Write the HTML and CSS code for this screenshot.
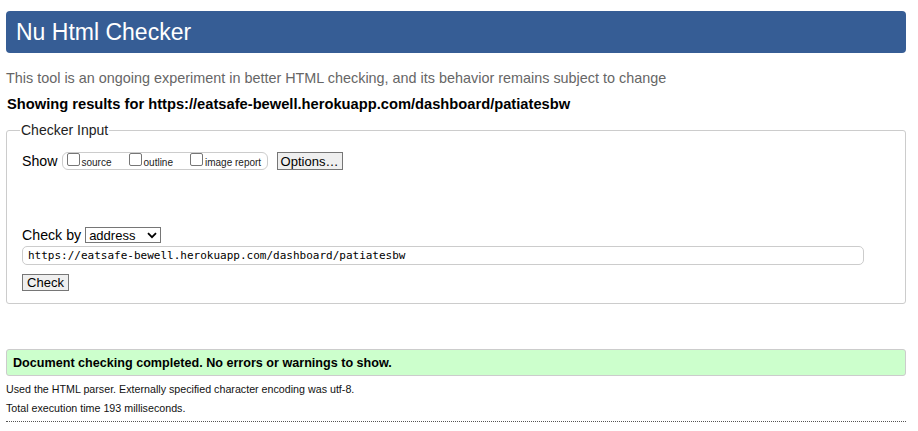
FILE: index.html
```html
<!DOCTYPE html>
<html>
<head>
<meta charset="utf-8">
<link rel="stylesheet" href="styles.css">
</head>
<body>
<header class="banner"><h1 class="title">Nu Html Checker</h1></header>
<p class="intro">This tool is an ongoing experiment in better HTML checking, and its behavior remains subject to change</p>
<p class="results-for">Showing results for https://eatsafe-bewell.herokuapp.com/dashboard/patiatesbw</p>
<fieldset class="checker">
  <legend class="legend">Checker Input</legend>
  <div class="show-row">
    <span class="show-label">Show</span>
    <span class="pill">
      <label class="opt"><span class="cb"></span>source</label>
      <label class="opt"><span class="cb"></span>outline</label>
      <label class="opt"><span class="cb"></span>image report</label>
    </span>
    <span class="btn btn-options">Options…</span>
  </div>
  <div class="checkby-row">
    <span class="checkby-label">Check by</span>
    <span class="select">address<svg class="chev" width="10" height="7" viewBox="0 0 10 7"><path d="M1 1.2 L5 5.2 L9 1.2" fill="none" stroke="#000" stroke-width="1.8"/></svg></span>
  </div>
  <div class="url">https://eatsafe-bewell.herokuapp.com/dashboard/patiatesbw</div>
  <div class="check-row"><span class="btn btn-check">Check</span></div>
</fieldset>
<div class="success">Document checking completed. No errors or warnings to show.</div>
<p class="meta">Used the HTML parser. Externally specified character encoding was utf-8.</p>
<p class="meta meta-last">Total execution time 193 milliseconds.</p>
<div class="rule"></div>
</body>
</html>
```
FILE: styles.css
```css
html, body { margin: 0; background: #fff; }
body {
  padding: 11px 12px 0 6px;
  font-family: "Liberation Sans", Arial, sans-serif;
  color: #000;
}
.banner {
  background: #365d95;
  border-radius: 4px;
  height: 42px;
  display: flex;
  align-items: center;
  padding-left: 10px;
}
.title {
  margin: 0;
  font-weight: normal;
  font-size: 23px;
  color: #fff;
}
.intro {
  margin: 17px 0 0 0;
  font-size: 14.4px;
  color: #666;
  line-height: 16px;
}
.results-for {
  margin: 10px 0 0 1px;
  font-size: 14.7px;
  font-weight: bold;
  line-height: 16px;
}
.checker {
  margin: 10px 0 0 0;
  padding: 14px 15px 12px 15px;
  border: 1px solid #ccc;
  border-radius: 3px;
}
.legend {
  padding: 0 1px;
  margin-left: -2px;
  font-size: 14px;
  color: #222;
}
.show-row {
  display: flex;
  align-items: center;
  height: 18px;
  margin-top: 0;
}
.show-label { font-size: 14.2px; margin-right: 4px; }
.pill {
  display: flex;
  align-items: center;
  height: 16px;
  border: 1px solid #ccc;
  border-radius: 6px;
  padding: 0 4px;
  width: 196px;
  box-sizing: content-box;
}
.opt {
  display: flex;
  align-items: center;
  font-size: 10px;
  color: #222;
  margin-right: 17px;
  padding-top: 2px;
}
.opt:last-child { margin-right: 0; }
.cb {
  width: 11px;
  height: 11px;
  border: 1px solid #767676;
  border-radius: 2px;
  margin-right: 2px;
  margin-top: -5px;
}
.btn {
  display: inline-flex;
  align-items: center;
  justify-content: center;
  border: 1px solid #767676;
  background: #efefef;
  font-size: 13px;
  color: #000;
  box-sizing: border-box;
}
.btn-options { margin-left: 9px; width: 66px; height: 18px; }
.checkby-row {
  display: flex;
  align-items: center;
  margin-top: 57px;
  height: 16px;
}
.checkby-label { font-size: 14.2px; margin-right: 4px; }
.select {
  display: inline-flex;
  align-items: center;
  justify-content: space-between;
  width: 76px;
  height: 16px;
  box-sizing: border-box;
  border: 1px solid #767676;
  font-size: 13px;
  padding: 0 3px 0 3px;
}
.url {
  margin-top: 3px;
  height: 19px;
  box-sizing: border-box;
  border: 1px solid #ccc;
  border-radius: 5px;
  font-family: "DejaVu Sans Mono", monospace;
  font-size: 11px;
  line-height: 17px;
  padding-left: 5px;
  width: 842px;
}
.check-row { margin-top: 9px; display: flex; }
.btn-check { width: 47px; height: 17px; }
.success {
  margin-top: 45px;
  height: 27px;
  box-sizing: border-box;
  background: #ccffcc;
  border: 1px solid #ccc;
  border-radius: 3px;
  font-size: 12.6px;
  font-weight: bold;
  display: flex;
  align-items: center;
  padding-left: 6px;
}
.meta {
  margin: 7px 0 0 0;
  font-size: 10.7px;
  line-height: 13px;
  color: #111;
}
.meta-last { margin-top: 6px; }
.rule {
  margin-top: 6px;
  border-top: 1px dotted #555;
}
```
